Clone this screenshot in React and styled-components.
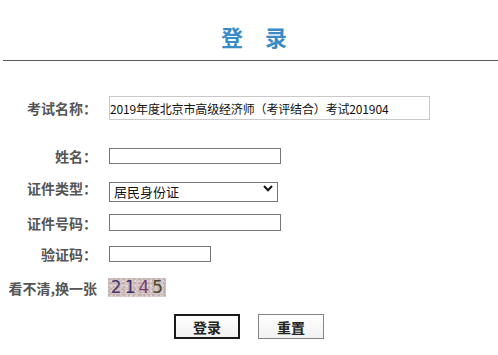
import React from "react";
import styled, { createGlobalStyle } from "styled-components";

const Global = createGlobalStyle`
  html, body { margin: 0; padding: 0; background: #fff; }
  body { font-family: "Noto Sans CJK SC", "Noto Sans", sans-serif; color: #333; width: 498px; overflow: hidden; }
`;

const Page = styled.div`
  width: 498px;
`;

const Title = styled.h1`
  margin: 0;
  padding: 25px 0 0 10px;
  text-align: center;
  font-size: 22px;
  line-height: 22px;
  font-weight: bold;
  color: #3a8cc6;
`;

const Rule = styled.div`
  margin: 13px 0 0 3px;
  border-top: 1px solid #5a5a5a;
`;

const Form = styled.form`
  display: flex;
  flex-direction: column;
  padding-top: 35px;
`;

const Row = styled.div`
  display: grid;
  grid-template-columns: 97px auto;
  column-gap: 12px;
  align-items: center;
  margin-top: ${(p) => p.$gap || 0}px;
  height: ${(p) => p.$h}px;
`;

const Label = styled.label`
  text-align: right;
  font-size: 14px;
  font-weight: bold;
  color: #555;
  white-space: nowrap;
  line-height: 16px;
`;

const Field = styled.input`
  box-sizing: border-box;
  width: ${(p) => p.$w}px;
  height: ${(p) => p.$h}px;
  margin: 0;
  padding: 0;
  border: 1px solid ${(p) => (p.$light ? "#c9c9c9" : "#777")};
  font-family: "Noto Sans CJK SC", sans-serif;
  font-size: 12px;
  letter-spacing: -0.15px;
  color: #111;
  background: #fff;
  outline: none;
`;

const SelectWrap = styled.div`
  position: relative;
  width: 169px;
  height: 20px;
`;

const Select = styled.select`
  box-sizing: border-box;
  width: 169px;
  height: 20px;
  margin: 0;
  padding: 0 0 0 4px;
  border: 1px solid #777;
  border-radius: 0;
  appearance: none;
  background: #fff;
  font-family: "Noto Sans CJK SC", sans-serif;
  font-size: 13px;
  line-height: 18px;
  color: #111;
  outline: none;
`;

const Chevron = styled.svg`
  position: absolute;
  right: 5px;
  top: 7px;
  pointer-events: none;
`;

const Captcha = styled.div`
  box-sizing: border-box;
  width: 58px;
  height: 19px;
  margin-left: -1px;
  display: flex;
  align-items: center;
  justify-content: center;
  gap: 3px;
  background-color: #d6c7c5;
  background-image:
    radial-gradient(circle at 20% 30%, #c4b2b0 0 1px, transparent 1.5px),
    radial-gradient(circle at 70% 60%, #e2d6d4 0 1px, transparent 1.5px),
    radial-gradient(circle at 45% 80%, #bfaeae 0 1px, transparent 1.5px);
  background-size: 5px 4px, 4px 5px, 6px 3px;
  font-family: "DejaVu Sans", sans-serif;
  font-size: 17px;
  line-height: 19px;
`;

const Digit = styled.span`
  color: ${(p) => p.$c};
`;

const Buttons = styled.div`
  display: flex;
  justify-content: center;
  gap: 18px;
  margin-top: 17px;
`;

const Button = styled.button`
  box-sizing: border-box;
  width: 66px;
  height: 25px;
  margin: 0;
  padding: 0;
  border: ${(p) => (p.$primary ? "2px solid #1a1a1a" : "1px solid #858585")};
  background: linear-gradient(#ffffff, #f1f1f1);
  font-family: "Noto Sans CJK SC", sans-serif;
  font-size: 14px;
  font-weight: bold;
  color: #222;
  cursor: pointer;
`;

export default function App() {
  return (
    <Page>
      <Global />
      <Title>登　录</Title>
      <Rule />
      <Form onSubmit={(e) => e.preventDefault()}>
        <Row $h={24}>
          <Label>考试名称：</Label>
          <Field
            $light
            $w={321}
            $h={24}
            readOnly
            value="2019年度北京市高级经济师（考评结合）考试201904"
          />
        </Row>
        <Row $gap={28} $h={16}>
          <Label>姓名：</Label>
          <Field $w={172} $h={16} />
        </Row>
        <Row $gap={14} $h={20}>
          <Label>证件类型：</Label>
          <SelectWrap>
            <Select defaultValue="居民身份证">
              <option>居民身份证</option>
            </Select>
            <Chevron width="10" height="7" viewBox="0 0 10 7">
              <path d="M1 1 L5 5.2 L9 1" fill="none" stroke="#111" strokeWidth="2" />
            </Chevron>
          </SelectWrap>
        </Row>
        <Row $gap={16} $h={17}>
          <Label>证件号码：</Label>
          <Field $w={172} $h={17} />
        </Row>
        <Row $gap={15} $h={16}>
          <Label>验证码：</Label>
          <Field $w={102} $h={16} />
        </Row>
        <Row $gap={16} $h={19}>
          <Label>看不清,换一张</Label>
          <Captcha>
            <Digit $c="#4a3a6c">2</Digit>
            <Digit $c="#3b2d6a">1</Digit>
            <Digit $c="#7c3b6b">4</Digit>
            <Digit $c="#4a452e">5</Digit>
          </Captcha>
        </Row>
        <Buttons>
          <Button $primary type="submit">登录</Button>
          <Button type="reset">重置</Button>
        </Buttons>
      </Form>
    </Page>
  );
}
